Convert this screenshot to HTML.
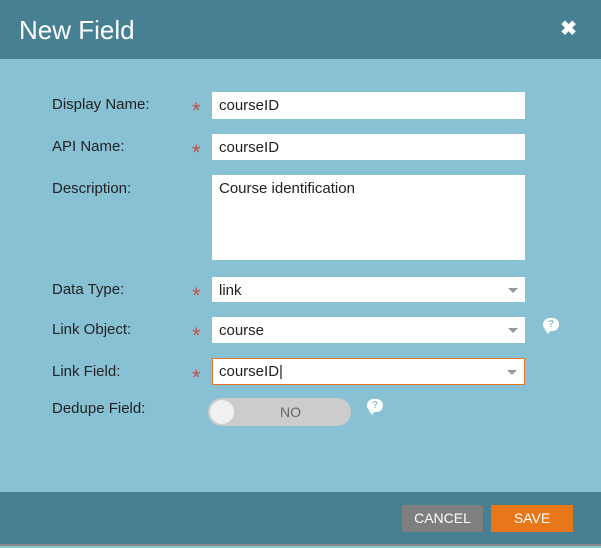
<!DOCTYPE html>
<html><head><style>
*{margin:0;padding:0;box-sizing:border-box}
body{width:601px;height:548px;background:#89c1d4;font-family:"Liberation Sans",sans-serif;position:relative;overflow:hidden;color:#222}
.hdr{position:absolute;left:0;top:0;width:601px;height:59px;background:#468092;color:#fff;font-size:26px;padding:15px 0 0 19px}
.x{position:absolute;right:24px;top:16px;font-size:20px;font-weight:bold;color:#fff}
.lbl{position:absolute;left:52px;font-size:15px;color:#222}
.star{position:absolute;left:192px;color:#c0504d;font-size:22px;line-height:1;margin-top:3px}
.in{position:absolute;left:212px;width:313px;background:#fff;font-size:15px;padding:5px 7px}
.arr{position:absolute;right:7px;top:11px;width:0;height:0;border-left:5px solid transparent;border-right:5px solid transparent;border-top:5px solid #999}
.q{position:absolute;width:16px;height:13px;background:#fff;border-radius:7px;color:#89c1d4;font-size:10px;font-weight:bold;text-align:center;line-height:13px}
.q:after{content:"";position:absolute;left:2px;bottom:-3px;border-left:3px solid transparent;border-right:3px solid transparent;border-top:4px solid #fff}
.ftr{position:absolute;left:0;top:492px;width:601px;height:54px;background:#468092;border-bottom:2px solid #888}
.btn{position:absolute;top:13px;height:27px;color:#fff;font-size:14px;text-align:center;line-height:27px}
</style></head><body>
<div class="hdr">New Field<span class="x">✖</span></div>
<div class="lbl" style="top:96px">Display Name:</div><div class="star" style="top:97px">*</div>
<div class="in" style="top:92px;height:27px">courseID</div>
<div class="lbl" style="top:138px">API Name:</div><div class="star" style="top:139px">*</div>
<div class="in" style="top:134px;height:26px">courseID</div>
<div class="lbl" style="top:180px">Description:</div>
<div class="in" style="top:175px;height:85px">Course identification</div>
<div class="lbl" style="top:281px">Data Type:</div><div class="star" style="top:282px">*</div>
<div class="in" style="top:277px;height:25px">link<span class="arr"></span></div>
<div class="lbl" style="top:321px">Link Object:</div><div class="star" style="top:322px">*</div>
<div class="in" style="top:317px;height:26px">course<span class="arr"></span></div>
<div class="q" style="left:543px;top:318px">?</div>
<div class="lbl" style="top:363px">Link Field:</div><div class="star" style="top:364px">*</div>
<div class="in" style="top:358px;height:27px;border:1px solid #e87722;padding:4px 6px">courseID|<span class="arr"></span></div>
<div class="lbl" style="top:400px">Dedupe Field:</div>
<div style="position:absolute;left:208px;top:398px;width:143px;height:28px;background:#ccc;border-radius:14px">
<div style="position:absolute;left:2px;top:2px;width:24px;height:24px;background:#f0f0f0;border-radius:12px"></div>
<div style="position:absolute;left:72px;top:6px;font-size:14px;color:#666">NO</div></div>
<div class="q" style="left:367px;top:399px">?</div>
<div class="ftr">
<div class="btn" style="left:402px;width:81px;background:#7f7f7f">CANCEL</div>
<div class="btn" style="left:491px;width:82px;background:#e8771a">SAVE</div>
</div>
</body></html>
